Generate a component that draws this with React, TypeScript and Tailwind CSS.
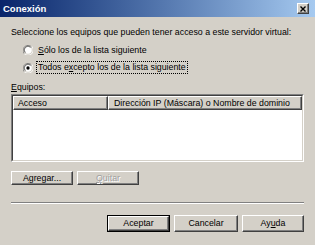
import React from "react";

const font = { fontFamily: '"Liberation Sans", Arial, sans-serif' };

function Radio({ checked }: { checked?: boolean }) {
  return (
    <svg width="10" height="10" viewBox="0 0 12 12" className="shrink-0">
      <path d="M10.5 2.5 A6 6 0 0 0 1.5 10.5" stroke="#808080" strokeWidth="1" fill="none" />
      <path d="M1.5 10.5 A6 6 0 0 0 10.5 1.5" stroke="#ffffff" strokeWidth="1" fill="none" />
      <circle cx="6" cy="6" r="4.5" fill="#ffffff" />
      <path d="M9.2 2.8 A4.5 4.5 0 0 0 2.8 9.2" stroke="#404040" strokeWidth="1" fill="none" />
      {checked && <circle cx="6" cy="6" r="2" fill="#000" />}
    </svg>
  );
}

function Btn({ children, w, def, disabled }: { children: React.ReactNode; w: string; def?: boolean; disabled?: boolean }) {
  const inner = (
    <div
      className={`flex h-full w-full items-center justify-center border border-t-white border-l-white border-r-[#404040] border-b-[#404040] bg-[#d4d0c8] shadow-[inset_-1px_-1px_#808080] text-[8.8px] leading-none ${
        disabled ? "text-[#a0a0a0] [text-shadow:1px_1px_#ffffff]" : "text-black"
      }`}
    >
      {children}
    </div>
  );
  if (def) {
    return <div className={`${w} h-[17px] border border-black`}>{inner}</div>;
  }
  return <div className={`${w}`}>{inner}</div>;
}

export default function App() {
  return (
    <div className="flex h-[245px] w-[315px] flex-col bg-[#d4d0c8] text-black" style={font}>
      <div className="flex h-[17px] items-center justify-between bg-gradient-to-r from-[#0a246a] to-[#a6caf0] pl-[3px] pr-[6px]">
        <span className="text-[9.5px] font-bold leading-none text-white">Conexión</span>
        <div className="flex h-[11px] w-[12px] items-center justify-center border border-t-white border-l-white border-r-[#404040] border-b-[#404040] bg-[#d4d0c8] shadow-[inset_-1px_-1px_#808080]">
          <svg width="6" height="6" viewBox="0 0 6 6">
            <path d="M0.5 0.5 L5.5 5.5 M5.5 0.5 L0.5 5.5" stroke="#000" strokeWidth="1.4" />
          </svg>
        </div>
      </div>

      <div className="flex flex-col px-[11px] text-[8.8px]">
        <div className="mt-[9px] h-[12px] leading-[12px]">
          Seleccione los equipos que pueden tener acceso a este servidor virtual:
        </div>
        <div className="mt-[6px] flex h-[12px] items-center gap-[4px] pl-[12px] leading-[12px]">
          <Radio />
          <span className="pl-[1px]">
            <span className="underline">S</span>ólo los de la lista siguiente
          </span>
        </div>
        <div className="mt-[5px] flex h-[13px] items-center gap-[3px] pl-[12px]">
          <Radio checked />
          <span className="flex h-[13px] items-center border border-dotted border-black px-[1px] leading-none">
            Todos e<span className="underline">x</span>cepto los de la lista siguiente
          </span>
        </div>
        <div className="mt-[7px] h-[12px] leading-[12px]">
          <span className="underline">E</span>quipos:
        </div>
        <div className="mt-[1px] h-[68px] border border-t-[#808080] border-l-[#808080] border-r-white border-b-white">
          <div className="flex h-full flex-col border border-t-[#404040] border-l-[#404040] border-r-[#d4d0c8] border-b-[#d4d0c8] bg-white">
            <div className="flex h-[14px]">
              <div className="flex w-[95px] items-center border border-t-white border-l-white border-r-[#404040] border-b-[#404040] bg-[#d4d0c8] pl-[4px] shadow-[inset_-1px_-1px_#808080] leading-none">
                Acceso
              </div>
              <div className="flex flex-1 items-center border border-t-white border-l-white border-r-[#404040] border-b-[#404040] bg-[#d4d0c8] pl-[5px] shadow-[inset_-1px_-1px_#808080] leading-none">
                Dirección IP (Máscara) o Nombre de dominio
              </div>
            </div>
            <div className="flex-1 bg-white" />
          </div>
        </div>
        <div className="mt-[9px] flex h-[14px] gap-[4px]">
          <Btn w="w-[62px]">
            A<span className="underline">g</span>regar...
          </Btn>
          <Btn w="w-[62px]" disabled>
            <span className="underline">Q</span>uitar
          </Btn>
        </div>
        <div className="mt-[17px] h-[2px] border-t border-t-[#808080] border-b border-b-white" />
        <div className="mt-[11px] flex h-[17px] justify-end gap-[4px]">
          <Btn w="w-[63px]" def>
            Aceptar
          </Btn>
          <Btn w="w-[64px]">Cancelar</Btn>
          <Btn w="w-[62px]">
            Ay<span className="underline">u</span>da
          </Btn>
        </div>
      </div>
    </div>
  );
}
